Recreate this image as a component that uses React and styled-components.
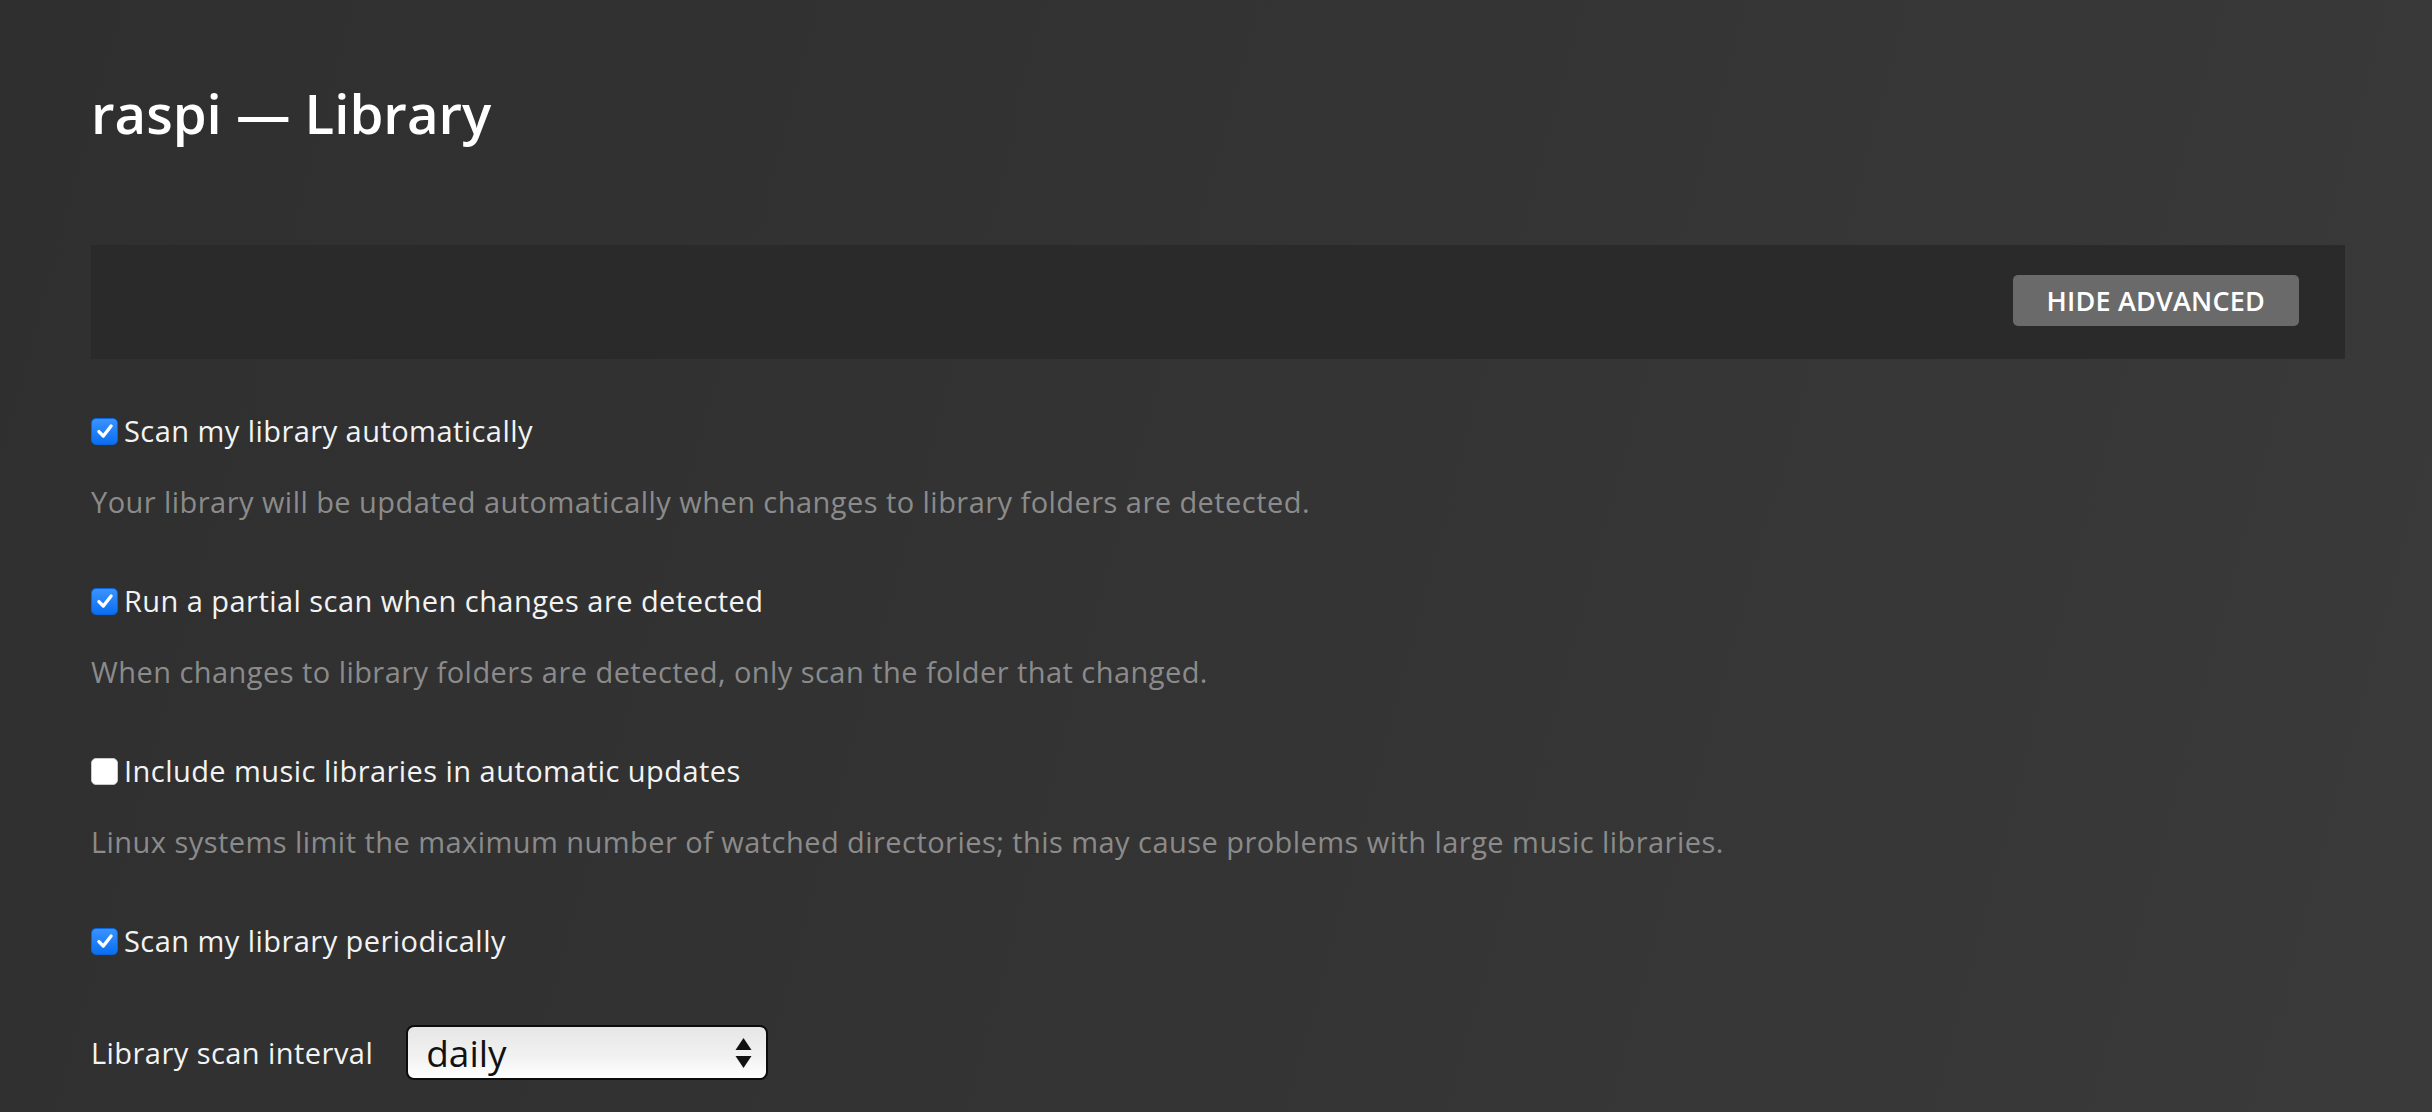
import React from 'react';
import styled, { createGlobalStyle } from 'styled-components';

const GlobalStyle = createGlobalStyle`
    html, body {
        margin: 0;
        padding: 0;
        height: 100%;
    }
    body {
        background: linear-gradient(105deg, #2f2f2f 0%, #333333 45%, #3a3a3a 100%);
        font-family: "Open Sans", "Noto Sans", sans-serif;
        color: #f1f1f1;
        overflow: hidden;
    }
`;

const Page = styled.div`
    min-height: 1112px;
    padding: 80px 87px 0 91px;
    box-sizing: border-box;
`;

const Title = styled.h1`
    margin: 0;
    font-size: 54.5px;
    line-height: 66px;
    font-weight: 600;
    color: #ffffff;
`;

const Toolbar = styled.div`
    margin-top: 99px;
    height: 114px;
    background: #2a2a2a;
    display: flex;
    align-items: center;
    justify-content: flex-end;
    padding: 0 46px 3px 0;
    box-sizing: border-box;
`;

const Button = styled.button`
    height: 51px;
    padding: 0 34px;
    border: none;
    border-radius: 5px;
    background: #6a6a6a;
    color: #ffffff;
    font-family: "Open Sans", "Noto Sans", sans-serif;
    font-size: 27px;
    font-weight: 600;
    letter-spacing: 0.2px;
    cursor: pointer;
`;

const Settings = styled.div`
    padding-top: 54px;
    display: flex;
    flex-direction: column;
`;

const Group = styled.div`
    display: flex;
    flex-direction: column;
    gap: 35px;
    margin-bottom: ${({ $last }) => ($last ? '0' : '63px')};
`;

const CheckRow = styled.label`
    display: flex;
    align-items: center;
    font-size: 29px;
    letter-spacing: 0.45px;
    line-height: 36px;
    color: #f3f3f3;
`;

const Box = styled.span`
    width: 27px;
    height: 27px;
    margin-right: 6px;
    border-radius: 5px;
    box-sizing: border-box;
    display: flex;
    align-items: center;
    justify-content: center;
    background: ${({ $checked }) =>
        $checked ? 'linear-gradient(#3a93ff, #0a6ef0)' : '#ffffff'};
    border: ${({ $checked }) => ($checked ? '1px solid #0a66df' : '1px solid #c9c9c9')};
`;

const Hint = styled.div`
    font-size: 29px;
    letter-spacing: 0.45px;
    line-height: 36px;
    color: #8b8b8b;
`;

const FieldRow = styled.div`
    margin-top: 66px;
    display: flex;
    align-items: center;
    gap: 33px;
`;

const FieldLabel = styled.span`
    font-size: 29px;
    letter-spacing: 0.45px;
    line-height: 36px;
    color: #f3f3f3;
`;

const Select = styled.div`
    width: 362px;
    height: 55px;
    box-sizing: border-box;
    border: 2px solid #0c0c0c;
    border-radius: 8px;
    background: linear-gradient(#e6e6e6, #f2f2f2 60%, #ffffff);
    display: flex;
    align-items: center;
    justify-content: space-between;
    padding: 0 14px 0 18px;
    font-size: 37px;
    color: #111111;
    line-height: 1;
`;

const Check = () => (
    <svg width="20" height="20" viewBox="0 0 18 18">
        <path d="M3.5 9.5 L7.5 13.5 L14.5 4.5" fill="none" stroke="#fff" strokeWidth="3" strokeLinecap="round" strokeLinejoin="round" />
    </svg>
);

const Arrows = () => (
    <svg width="17" height="32" viewBox="0 0 17 32">
        <path d="M8.5 1 L16.5 13 L0.5 13 Z" fill="#111" />
        <path d="M0.5 19 L16.5 19 L8.5 31 Z" fill="#111" />
    </svg>
);

const settings = [
    {
        label: 'Scan my library automatically',
        hint: 'Your library will be updated automatically when changes to library folders are detected.',
        checked: true,
    },
    {
        label: 'Run a partial scan when changes are detected',
        hint: 'When changes to library folders are detected, only scan the folder that changed.',
        checked: true,
    },
    {
        label: 'Include music libraries in automatic updates',
        hint: 'Linux systems limit the maximum number of watched directories; this may cause problems with large music libraries.',
        checked: false,
    },
    {
        label: 'Scan my library periodically',
        checked: true,
    },
];

const App = () => {
    return (
        <Page>
            <GlobalStyle />
            <Title>raspi — Library</Title>
            <Toolbar>
                <Button>HIDE ADVANCED</Button>
            </Toolbar>
            <Settings>
                {settings.map((item, index) => (
                    <Group key={item.label} $last={index === settings.length - 1}>
                        <CheckRow>
                            <Box $checked={item.checked}>{item.checked && <Check />}</Box>
                            {item.label}
                        </CheckRow>
                        {item.hint && <Hint>{item.hint}</Hint>}
                    </Group>
                ))}
                <FieldRow>
                    <FieldLabel>Library scan interval</FieldLabel>
                    <Select>
                        <span>daily</span>
                        <Arrows />
                    </Select>
                </FieldRow>
            </Settings>
        </Page>
    );
};

export default App;
